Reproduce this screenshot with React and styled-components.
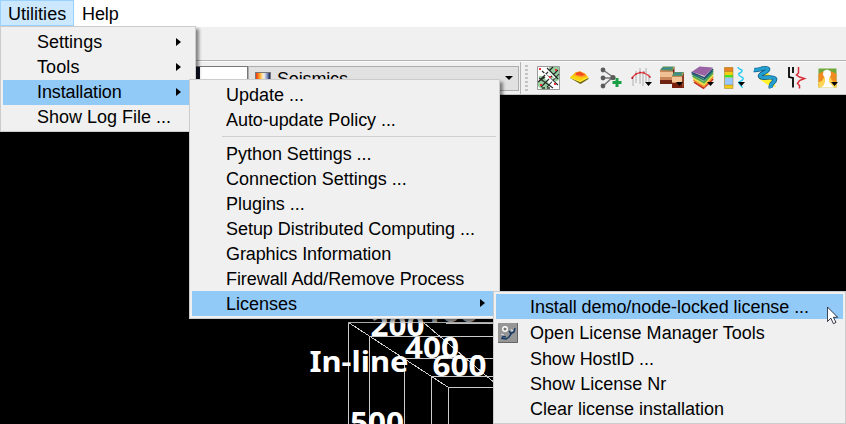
import React from "react";
import styled, { createGlobalStyle } from "styled-components";

const GlobalStyle = createGlobalStyle`
  * { box-sizing: border-box; }
  body { margin: 0; overflow: hidden; background: #000; }
`;

const Window = styled.div`
  position: relative;
  display: flex;
  flex-direction: column;
  width: 846px;
  height: 424px;
  overflow: hidden;
  background: #000;
  color: #000;
  font: 18px/25px "Liberation Sans", Arial, sans-serif;
  white-space: nowrap;
`;

const MenuBar = styled.nav`
  display: flex;
  height: 27px;
  flex: none;
  background: #fff;
`;

const MenuBarItem = styled.div`
  height: 26px;
  padding: 0 7px;
  line-height: 26px;
  border: 1px solid ${(p) => (p.$active ? "#99d1ff" : "transparent")};
  background: ${(p) => (p.$active ? "#cce8ff" : "transparent")};
  width: ${(p) => p.$width}px;
  letter-spacing: ${(p) => p.$spacing || 0}px;
`;

const UpperToolBar = styled.div`
  height: 34px;
  flex: none;
  background: #f0f0f0;
  border-bottom: 1px solid #b4b4b4;
`;

const ToolBar = styled.div`
  display: flex;
  height: 34px;
  flex: none;
  background: #f0f0f0;
  border-top: 1px solid #fafafa;
  border-bottom: 1px solid #c4c4c4;
`;

const ValueField = styled.div`
  width: 248px;
  height: 25px;
  margin-top: 4px;
  background: #fff;
  border: 1px solid #777;
  border-left: 200px solid #101426;
`;

const AttributeSelect = styled.div`
  display: flex;
  align-items: center;
  width: 271px;
  height: 25px;
  margin-top: 4px;
  padding: 0 5px 0 6px;
  gap: 6px;
  background: #e1e1e1;
  border: 1px solid #adadad;
`;

const ColorSwatch = styled.span`
  width: 16px;
  height: 13px;
  border: 1px solid #777;
  background: linear-gradient(90deg, #ee3218, #ff9f21 25%, #ffe1a0 44%, #eee 58%, #8c9ac9 78%, #17264e);
`;

const SelectLabel = styled.span`
  flex: 1;
  padding-top: 1px;
  letter-spacing: -0.15px;
`;

const IconStrip = styled.div`
  display: flex;
  margin-left: 1px;
  border-left: 1px solid #b4b4b4;
`;

const Grip = styled.div`
  width: 3px;
  height: 27px;
  margin: 3px 5px 0 4px;
  background: repeating-linear-gradient(#c4c4c4 0 2px, #f0f0f0 2px 4px);
`;

const ToolButton = styled.div`
  width: 31px;
  height: 32px;
  flex: none;
  svg { display: block; }
`;

const Scene = styled.svg`
  display: block;
  flex: none;
  width: 846px;
  height: 329px;
  background: #000;
`;

const AxisText = styled.text`
  fill: #fff;
  font-family: "Noto Sans", "Open Sans", sans-serif;
  font-weight: 700;
  font-size: 28px;
`;

const Menu = styled.div`
  position: absolute;
  left: ${(p) => p.$x}px;
  top: ${(p) => p.$y}px;
  width: ${(p) => p.$w}px;
  height: ${(p) => p.$h}px;
  padding: ${(p) => p.$pad || "2px"};
  background: #f0f0f0;
  border: 1px solid #ccc;
  box-shadow: 3px 3px 3px rgba(0, 0, 0, 0.45);
`;

const MenuRow = styled.div`
  position: relative;
  display: flex;
  align-items: center;
  justify-content: space-between;
  height: ${(p) => p.$h || 25}px;
  padding-left: 34px;
  padding-right: 12px;
  background: ${(p) => (p.$active ? "#91c9f7" : "transparent")};
  letter-spacing: ${(p) => p.$spacing ?? 0}px;
`;

const MenuLabel = styled.span`
  padding-top: ${(p) => p.$drop || 0}px;
`;

const Separator = styled.div`
  height: 9px;
  margin: 0 1px 0 30px;
  border-top: 1px solid #d0d0d0;
  transform: translateY(4px);
`;

const Arrow = styled.span`
  margin-bottom: 2px;
  border: 4px solid transparent;
  border-left-width: 5px;
  border-left-color: #000;
  border-right: 0;
`;

const RowIcon = styled.svg`
  position: absolute;
  left: 2px;
  top: 4px;
`;

const Pointer = styled.svg`
  position: absolute;
  left: 827px;
  top: 306px;
`;

const Drop = () => <path d="M19 20h7l-3.5 4z" fill="#000" stroke="none" />;

const toolIcons = [
  <g key="survey">
    <path d="M4.500 4.500h22v23h-22z" fill="#fff" stroke="#999" />
    <path d="M16 5h10v13l-4 2-6-9zM5 20l6-5 6 8-2 4H8l-3-3zM6 14h5v3H6z" fill="#96cf9f" />
    <path d="M6 19 20 5M8 25 25 8M14 25 26 12M9 9l16 14M14 6l11 11M6 16l14 10M12 15l-7 5" fill="none" stroke="#272727" strokeWidth="1.100" />
    <path d="m11 11 11 11M15 9l7 7" fill="none" stroke="#fff" strokeWidth="1.400" />
    <path d="M6 6h2v2H6zM22 7h2v2h-2zM7 22h2v2H7zM16 14h2v2h-2zM21 21h2v2h-2z" fill="#f02e35" />
    <path d="M9 26h3m2 0h3" fill="none" stroke="#333" strokeWidth="1.500" />
  </g>,
  <g key="horizon">
    <path d="m6 16 3-2 15 1 .5 2-8 5z" fill="#70631a" />
    <path d="m6 15 4-3 1-1.500 5-1 5 2 3.500 4-8 4.500z" fill="#fbd30d" />
    <path d="m6 15.500 10 4 8-4" fill="none" stroke="#fff23a" />
    <path d="m9 13 3-3 4-.500 5 2 2 3-6 1z" fill="#ff9f24" />
    <path d="m12 11 4-1.500 5 3-3 1.500-6-1z" fill="#f44d20" />
  </g>,
  <g key="network" stroke="#777" strokeWidth="1.500">
    <path d="m8 8 10 7L8 24M8 16h10" fill="none" />
    <g fill="#5c5c5c" stroke="none"><circle cx="8" cy="8" r="2.400" /><circle cx="8" cy="16" r="2.400" /><circle cx="8" cy="24" r="2.400" /><circle cx="18" cy="15.500" r="2.600" /></g>
    <path d="M22 16v9m-4.500-4.500h9" fill="none" stroke="#1a9f45" strokeWidth="3" />
  </g>,
  <g key="wells" fill="none">
    <path d="M7 14v10M10 9v12M14 6v16M17 9v15M20 6v14M23 12v10" stroke="#bbb" strokeWidth="1.200" />
    <path d="M6 16c5-7 12-7 18-1" stroke="#e43a3f" strokeWidth="1.300" />
    <path d="M5.500 16h1.500m2.500-4h1m3-1.500h1m3 0h1m5 4.500h1" stroke="#b41320" strokeWidth="1.800" />
    <Drop />
  </g>,
  <g key="fault">
    <path d="M3 8h13v14H3z" fill="#c98559" />
    <path d="M3 10h13v5H3z" fill="#f0bf93" />
    <path d="m3 8 3-3.500h11.500L16 9z" fill="#558f5c" />
    <path d="m16 8 1.500-3.500v14L16 22zM3 18h13v4H3z" fill="#702414" />
    <path d="M15 14h10v12H15z" fill="#c78a56" />
    <path d="M15 15h10v5H15z" fill="#f5c69a" />
    <path d="M15 21h12v5H15z" fill="#781e0e" />
    <path d="m25 14 2-4v14l-2 2z" fill="#934126" />
    <path d="m15 14 2-4h10l-2 4z" fill="#52936a" />
    <path d="m5 7 10-1m3 6 6-.5" fill="none" stroke="#3187b0" />
    <path d="m16 7 1-2m8 7 1-1" fill="none" stroke="#d2b448" />
    <Drop />
  </g>,
  <g key="layers" fill="none" strokeWidth="1.800">
    <path d="m4 10 1 8 10 8.500L26 18V6l-9 8z" fill="#ece7c6" />
    <path d="m6 20 9.500 6 9.500-9" stroke="#c22b20" />
    <path d="m5.500 18 10.500 6.500 9-9.500" stroke="#ef8b31" />
    <path d="m5 16 11 6.500 9-9.500" stroke="#f2df45" />
    <path d="m4.500 14 11.500 6.500 9-9.500" stroke="#56ad4c" />
    <path d="m4 12 12 6 9-9" stroke="#267f68" />
    <path d="m3.500 10.500 13 5.500 8.500-9" stroke="#244b78" />
    <path d="m3.500 10 8-5.500L25 5.500 17 14z" fill="#9a64a4" />
    <Drop />
  </g>,
  <g key="stratigraphy">
    <path d="M5.500 5.500h8.500v21H5.500z" fill="#f4ce16" />
    <path d="M5.500 5.500h8.500v4H5.500z" fill="#e98125" />
    <path d="M5.500 13h8.500v2.500H5.500z" fill="#45e321" />
    <path d="M5.500 15.500h8.500v7.500H5.500z" fill="#98c8ff" />
    <path d="M5.500 5.500h8.500v21H5.500zM5.500 9.500h8.500M5.500 23h8.500" fill="none" stroke="#9b762d" strokeWidth=".5" />
    <path d="M19 5c0 3 5 2 4 4-1 3-4 1-3 4 1 2 5 2 4 4-1 3-5 2-4 4 1 3 4 3 3 5" fill="none" stroke="#28cdf5" strokeWidth="1.500" />
    <Drop />
  </g>,
  <g key="channel">
    <path d="m17 9 9 16-8-2-9-6z" fill="#fff12c" />
    <path d="M4 8c4 1 12-4 14-1 1 3-8 4-8 7 1 4 13-1 15 3 1 3-6 4-4 9" fill="none" stroke="#155e85" strokeWidth="4.500" />
    <path d="M4 8c4 1 12-4 14-1 1 3-8 4-8 7 1 4 13-1 15 3 1 3-6 4-4 9" fill="none" stroke="#249fd2" strokeWidth="3" />
  </g>,
  <g key="logs" fill="none" strokeWidth="1.800">
    <path d="M8 5v10l4 1v9.500M12 5v6" stroke="#050505" />
    <path d="M17.500 5v6l-2 2 3 2 5 1.500-5 2-2 3 2 2v3" stroke="#d92d39" strokeWidth="1.500" />
  </g>,
  <g key="salt">
    <path d="M6.500 6.500h18v19h-18z" fill="#70a83c" />
    <path d="M6.500 12c5-4 13-4 18 0v13h-18z" fill="#f08b22" />
    <path d="M6.500 20c4 0 4-3 6-5h6c1 4 2 5 6 5v5.500h-18z" fill="#ffd553" />
    <path d="M13 20v-4l-2-3 .5-4 3.500-1.500L18.500 9l.5 4-2 3v4l5 5.500H8c4-1 4-3 5-5.500z" fill="#fff" />
    <Drop />
  </g>,
];

function Items({ rows, drop }) {
  return rows.map(([label, options = {}]) => (
    <MenuRow key={label} $active={options.active} $spacing={options.spacing} $h={options.height}>
      {options.icon}
      <MenuLabel $drop={drop}>{label}</MenuLabel>
      {options.submenu && <Arrow />}
    </MenuRow>
  ));
}

const licenseIcon = (
  <RowIcon width="20" height="20" viewBox="0 0 20 20">
    <path d="M0 0h20v20H0z" fill="#969696" />
    <path d="M0 19.500h19.500V0" fill="none" stroke="#666" />
    <circle cx="7" cy="6" r="2.300" fill="#777" stroke="#fff" strokeWidth="1.400" />
    <path d="m11 8 2 3-2 3-3 2-4-.500 1-2 3 .500M12 11l4-2 1-4" fill="none" stroke="#173b67" strokeWidth="1.500" />
    <path d="m3 11 3 1M13 6l1 2 1-1" fill="none" stroke="#d9e2e9" />
  </RowIcon>
);

export default function App() {
  return (
    <Window>
      <GlobalStyle />
      <MenuBar>
        <MenuBarItem $active $width={74} $spacing={0.02}>Utilities</MenuBarItem>
        <MenuBarItem $width={56} $spacing={-0.1}>Help</MenuBarItem>
      </MenuBar>
      <UpperToolBar />
      <ToolBar>
        <ValueField />
        <AttributeSelect>
          <ColorSwatch />
          <SelectLabel>Seismics</SelectLabel>
          <svg width="8" height="5"><path d="M0 0h8L4 4z" /></svg>
        </AttributeSelect>
        <IconStrip>
          <Grip />
          {toolIcons.map((icon) => (
            <ToolButton key={icon.key}><svg width="31" height="32">{icon}</svg></ToolButton>
          ))}
        </IconStrip>
      </ToolBar>
      <Scene viewBox="0 95 846 329">
        <AxisText x="424" y="322" textLength="54" lengthAdjust="spacingAndGlyphs" opacity=".75">100</AxisText>
        <g fill="none" stroke="#ccc" shapeRendering="crispEdges">
          <path d="M348.500 424V322.500H500M369.500 424V336.500H500M404.500 424V358.500H500M431.500 424V376.500H500M448.500 424V387.500H500M348.500 322.500 448.500 387.500M423.500 322.500 500 387.500M446 323.500H500" />
        </g>
        <AxisText x="370.500" y="335.500" textLength="54" lengthAdjust="spacingAndGlyphs">200</AxisText>
        <AxisText x="405" y="358" textLength="54" lengthAdjust="spacingAndGlyphs">400</AxisText>
        <AxisText x="432.500" y="376" textLength="54" lengthAdjust="spacingAndGlyphs">600</AxisText>
        <AxisText x="309.500" y="372" textLength="99" lengthAdjust="spacingAndGlyphs">In-line</AxisText>
        <AxisText x="350" y="433" textLength="54" lengthAdjust="spacingAndGlyphs">500</AxisText>
      </Scene>
      <Menu $x={0} $y={26} $w={196} $h={106} $pad="3px 2px 2px">
        <Items rows={[
          ["Settings", { submenu: true, spacing: 0.02 }],
          ["Tools", { submenu: true, spacing: 0.1 }],
          ["Installation", { submenu: true, active: true, spacing: -0.12 }],
          ["Show Log File ..."],
        ]} />
      </Menu>
      <Menu $x={189} $y={79} $w={311} $h={240}>
        <Items drop={2} rows={[["Update ..."], ["Auto-update Policy ...", { spacing: -0.06 }]]} />
        <Separator />
        <Items drop={2} rows={[
          ["Python Settings ...", { spacing: -0.03 }],
          ["Connection Settings ...", { spacing: -0.02 }],
          ["Plugins ...", { spacing: -0.03 }],
          ["Setup Distributed Computing ...", { spacing: -0.04 }],
          ["Graphics Information", { spacing: -0.1 }],
          ["Firewall Add/Remove Process", { spacing: -0.07 }],
          ["Licenses", { active: true, submenu: true }],
        ]} />
      </Menu>
      <Menu $x={493} $y={291} $w={353} $h={133}>
        <Items drop={2} rows={[
          ["Install demo/node-locked license ...", { active: true, spacing: -0.06 }],
          ["Open License Manager Tools", { height: 27, icon: licenseIcon, spacing: 0.04 }],
          ["Show HostID ...", { spacing: -0.08 }],
          ["Show License Nr", { spacing: 0.02 }],
          ["Clear license installation", { spacing: 0 }],
        ]} />
      </Menu>
      <Pointer width="12" height="20" viewBox="0 0 14 22">
        <path d="M.5.5v17l4-4 3 6.500 3-1.500-3-6h5z" fill="#fff" stroke="#16192b" />
      </Pointer>
    </Window>
  );
}
